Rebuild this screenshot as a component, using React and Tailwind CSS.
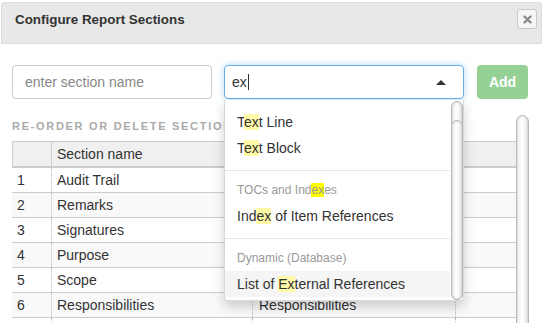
const HL = ({ children, bright }) => (
  <span className={bright ? "bg-[#ffff00]" : "bg-[#fffaa8]"}>{children}</span>
);

const rows = [
  ["1", "Audit Trail", ""],
  ["2", "Remarks", ""],
  ["3", "Signatures", ""],
  ["4", "Purpose", ""],
  ["5", "Scope", ""],
  ["6", "Responsibilities", "Responsibilities"],
  ["", "", ""],
];

function Pill({ className }) {
  return (
    <div
      className={
        "absolute rounded-full border border-[#b8b8b8] bg-gradient-to-r from-[#f2f2f2] via-white to-[#e6e6e6] shadow-[inset_0_0_3px_rgba(0,0,0,0.18)] " +
        className
      }
    />
  );
}

export default function App() {
  return (
    <div className="relative w-[543px] h-[323px] overflow-hidden bg-white text-[#333] font-['Liberation_Sans',Arial,sans-serif]">
      {/* Header */}
      <div className="mx-[1px] mt-[2px] h-[42px] flex items-start justify-between rounded-t-[3px] border border-[#dcdcdc] bg-[#e8e8e8] pl-[13px] pr-[4px]">
        <div className="mt-[9px] text-[13.4px] font-bold leading-[16px] text-[#333]">
          Configure Report Sections
        </div>
        <div className="mt-[6px] w-[20px] h-[20px] flex items-center justify-center rounded-[3px] border border-[#c8c8c8] bg-[#f6f6f6]">
          <svg width="9" height="9" viewBox="0 0 9 9">
            <path d="M1.5 1.5 L7.5 7.5 M7.5 1.5 L1.5 7.5" stroke="#8a8a8a" strokeWidth="2.4" strokeLinecap="round" />
          </svg>
        </div>
      </div>

      {/* Input row */}
      <div className="mt-[21px] flex px-[12px]">
        <div className="w-[200px] h-[34px] flex items-center rounded-[4px] border border-[#ccc] pl-[12px] text-[14px] text-[#888]">
          enter section name
        </div>
        <div className="ml-[12px] w-[240px] h-[34px] flex items-center justify-between rounded-[4px] border border-[#66afe9] shadow-[0_0_6px_rgba(102,175,233,0.5)] pl-[7px] pr-[17px] text-[14px] text-[#333]">
          <div className="flex items-center">
            <span>ex</span>
            <span className="ml-[1px] inline-block w-[1px] h-[16px] bg-[#333]" />
          </div>
          <svg width="10" height="5" viewBox="0 0 10 5">
            <path d="M0 5 L5 0 L10 5 Z" fill="#333" />
          </svg>
        </div>
        <div className="ml-[13px] w-[51px] h-[34px] flex items-center justify-center rounded-[4px] bg-[#95d195] text-[14px] font-bold text-white">
          Add
        </div>
      </div>

      {/* Label */}
      <div className="mt-[20px] px-[12px] text-[11px] font-bold leading-[14px] tracking-[1.7px] text-[#aaa] whitespace-nowrap">
        RE-ORDER OR DELETE SECTIONS
      </div>

      {/* Table */}
      <div className="mt-[8px] ml-[12px] w-[505px] text-[14px] text-[#333]">
        <div className="flex h-[27px] border-t border-b-2 border-[#ccc] bg-[#f0f0f0] leading-[24px]">
          <div className="w-[39px] border-l border-[#ccc]" />
          <div className="w-[201px] border-l border-[#ccc] pl-[5px]">Section name</div>
          <div className="w-[203px] border-l border-[#ccc] pl-[6px]" />
          <div className="w-[62px] border-l border-r border-[#ccc]" />
        </div>
        {rows.map(([n, name, title], i) => (
          <div
            key={i}
            className={
              "flex h-[25px] border-b border-[#ccc] leading-[24px] " +
              (i % 2 === 1 ? "bg-[#f9f9f9]" : "bg-white")
            }
          >
            <div className="w-[39px] pl-[5px]">{n}</div>
            <div className="w-[201px] border-l border-dotted border-[#bbb] pl-[5px]">{name}</div>
            <div className="w-[203px] border-l border-dotted border-[#bbb] pl-[6px]">{title}</div>
            <div className="w-[62px] border-l border-r border-dotted border-[#bbb]" />
          </div>
        ))}
      </div>

      {/* Main scrollbar */}
      <Pill className="left-[516px] top-[115px] w-[13px] h-[230px]" />

      {/* Dropdown */}
      <div className="absolute left-[224px] top-[100px] w-[240px] h-[201px] rounded-b-[4px] border-x border-b border-[rgba(0,0,0,0.15)] bg-white shadow-[0_6px_12px_rgba(0,0,0,0.175)] text-[14px] leading-[16px] text-[#333]">
        <div className="mr-[13px] pt-[9px] pb-[3px]">
          <div className="h-[26px] flex items-center pl-[12px]">
            <span>T<HL>ex</HL>t Line</span>
          </div>
          <div className="h-[26px] flex items-center pl-[12px]">
            <span>T<HL>ex</HL>t Block</span>
          </div>
          <div className="h-[9px]" />
          <div className="h-[1px] bg-[#e5e5e5]" />
          <div className="h-[32px] pt-[11px] pl-[12px] text-[12px] leading-[16px] text-[#999]">
            TOCs and Ind<HL bright>ex</HL>es
          </div>
          <div className="h-[26px] flex items-center pl-[12px]">
            <span>Ind<HL>ex</HL> of Item References</span>
          </div>
          <div className="h-[9px]" />
          <div className="h-[1px] bg-[#e5e5e5]" />
          <div className="h-[32px] pt-[11px] pl-[12px] text-[12px] leading-[16px] text-[#999]">
            Dynamic (Database)
          </div>
          <div className="h-[26px] flex items-center pl-[12px] bg-[#f5f5f5]">
            <span>List of <HL>Ex</HL>ternal References</span>
          </div>
        </div>
        <Pill className="right-[0px] top-[1px] w-[12px] h-[199px]" />
        <Pill className="right-[0px] top-[20px] w-[12px] h-[180px] border-[#aaa]" />
      </div>
    </div>
  );
}
